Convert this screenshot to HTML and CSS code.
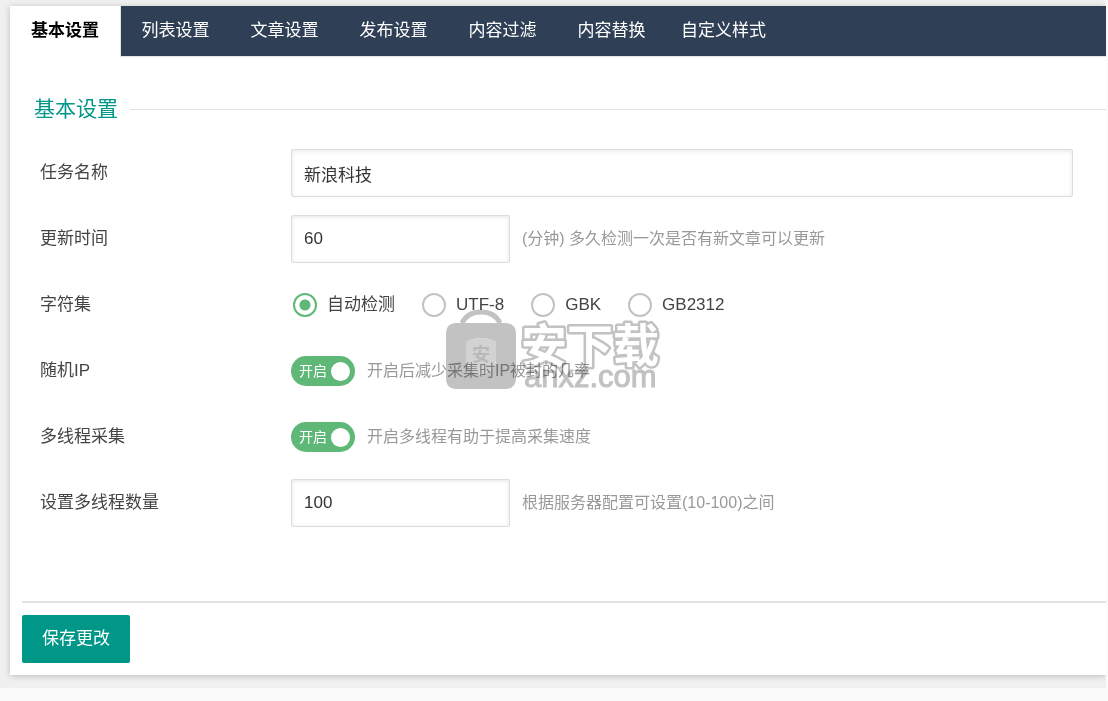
FILE: index.html
```html
<!DOCTYPE html>
<html lang="zh-CN">
<head>
<meta charset="utf-8">
<title>基本设置</title>
<link rel="stylesheet" href="styles.css">
</head>
<body>
<main class="page">
  <form class="panel">
    <nav class="tabs">
      <a class="tab tab-active" href="#basic">基本设置</a>
      <a class="tab" href="#list">列表设置</a>
      <a class="tab" href="#article">文章设置</a>
      <a class="tab" href="#publish">发布设置</a>
      <a class="tab" href="#filter">内容过滤</a>
      <a class="tab" href="#replace">内容替换</a>
      <a class="tab" href="#style">自定义样式</a>
    </nav>
    <h2 class="title">基本设置</h2>
    <div class="rows">
      <div class="row">
        <label class="name" for="task">任务名称</label>
        <div class="field"><input class="text" id="task" type="text" value="新浪科技"></div>
      </div>
      <div class="row">
        <label class="name" for="interval">更新时间</label>
        <div class="field"><input class="text text-short" id="interval" type="text" value="60"><span class="hint">(分钟) 多久检测一次是否有新文章可以更新</span></div>
      </div>
      <div class="row" role="radiogroup" aria-labelledby="charset">
        <span class="name" id="charset">字符集</span>
        <div class="field radios">
          <label class="choice"><input class="radio" type="radio" name="charset" checked>自动检测</label>
          <label class="choice"><input class="radio" type="radio" name="charset">UTF-8</label>
          <label class="choice"><input class="radio" type="radio" name="charset">GBK</label>
          <label class="choice"><input class="radio" type="radio" name="charset">GB2312</label>
        </div>
      </div>
      <div class="row">
        <label class="name" for="random-ip">随机IP</label>
        <div class="field"><label class="switch"><input class="switch-input" id="random-ip" type="checkbox" role="switch" checked>开启<span class="knob"></span></label><span class="hint">开启后减少采集时IP被封的几率</span></div>
      </div>
      <div class="row">
        <label class="name" for="threads">多线程采集</label>
        <div class="field"><label class="switch"><input class="switch-input" id="threads" type="checkbox" role="switch" checked>开启<span class="knob"></span></label><span class="hint">开启多线程有助于提高采集速度</span></div>
      </div>
      <div class="row">
        <label class="name" for="count">设置多线程数量</label>
        <div class="field"><input class="text text-short" id="count" type="text" value="100"><span class="hint">根据服务器配置可设置(10-100)之间</span></div>
      </div>
    </div>
    <div class="actions"><button class="save" type="button">保存更改</button></div>
  </form>
</main>
<svg class="watermark" width="220" height="86" viewBox="0 0 220 86" aria-hidden="true">
  <path d="M17 15C21 7 28 4 36 4s15 3 19 11" fill="none" stroke="#c2c2c2" stroke-width="5"/>
  <path fill="#c2c2c2" fill-rule="evenodd" d="M12 15H60Q71 15 71 26V70Q71 81 60 81H12Q1 81 1 70V26Q1 15 12 15ZM21 34Q36 26 51 34V53Q50 62 36 67Q22 62 21 53Z"/>
  <path fill="#d2d2d2" d="M21 34Q36 26 51 34V53Q50 62 36 67Q22 62 21 53Z"/>
  <text class="seal" x="27" y="53">安</text>
  <text class="brand" x="76" y="54">安下载</text>
  <text class="domain" x="79" y="79">anxz.com</text>
</svg>
</body>
</html>
```
FILE: styles.css
```css
* { box-sizing: border-box; }
body {
  margin: 0;
  background: #fafafa;
  color: #444;
  font: 17px/24px "Liberation Sans", "Noto Sans CJK SC", sans-serif;
}
.page {
  margin-right: 2px;
  padding: 6px 0 13px 10px;
  background: #f0f0f0;
  overflow: hidden;
}
.panel {
  margin: 0;
  background: #fff;
  box-shadow: 0 1px 6px rgba(0, 0, 0, 0.22);
}
.tabs {
  display: flex;
  height: 51px;
  background: #2f4056;
  border-bottom: 1px solid #e2e2e2;
}
.tab {
  min-width: 109px;
  padding: 0 15px;
  line-height: 50px;
  text-align: center;
  color: #fff;
  text-decoration: none;
  white-space: nowrap;
}
.tab-active {
  min-width: 111px;
  height: 51px;
  background: #fff;
  border-right: 1px solid #e2e2e2;
  color: #000;
  font-weight: 700;
}
.title {
  display: flex;
  align-items: center;
  gap: 12px;
  margin: 0;
  padding: 36px 0 14px 24px;
  color: #009688;
  font-size: 21px;
  font-weight: 400;
  line-height: 32px;
}
.title::after {
  content: "";
  flex: 1;
  height: 1px;
  background: #e2e2e2;
}
.rows { padding: 1px 33px 0 30px; }
.row {
  display: grid;
  grid-template-columns: 251px 1fr;
  align-items: center;
  height: 66px;
}
.field {
  display: flex;
  align-items: center;
  gap: 12px;
}
.text {
  width: 100%;
  height: 48px;
  padding: 0 12px;
  border: 1px solid #ddd;
  border-radius: 2px;
  background: #fff;
  box-shadow: inset 0 1px 4px rgba(0, 0, 0, 0.1);
  color: #333;
  font: inherit;
}
.text-short { width: 219px; }
.hint {
  color: #999;
  font-size: 16px;
  white-space: nowrap;
}
.radios {
  gap: 27px;
  padding-left: 2px;
}
.choice {
  display: flex;
  align-items: center;
  gap: 10px;
}
.radio {
  appearance: none;
  width: 24px;
  height: 24px;
  margin: 0;
  border: 2px solid #c2c2c2;
  border-radius: 50%;
}
.radio:checked {
  border-color: #5fb878;
  background: radial-gradient(circle, #5fb878 5px, #fff 6px);
}
.switch {
  display: flex;
  align-items: center;
  justify-content: space-between;
  width: 64px;
  height: 30px;
  padding: 0 5px 0 8px;
  border-radius: 15px;
  background: #5fb878;
  color: #fff;
  font-size: 14px;
}
.switch-input {
  position: absolute;
  opacity: 0;
}
.knob {
  width: 19px;
  height: 19px;
  border-radius: 50%;
  background: #fff;
}
.actions {
  margin: 65px 0 0 12px;
  padding: 12px 0;
  border-top: 2px solid #e2e2e2;
}
.save {
  display: block;
  height: 48px;
  padding: 0 20px;
  border: 0;
  border-radius: 2px;
  background: #009688;
  color: #fff;
  font: inherit;
}
.watermark {
  position: absolute;
  left: 445px;
  top: 308px;
  pointer-events: none;
  mix-blend-mode: multiply;
}
.seal {
  fill: #b8b8b8;
  font-size: 18px;
  font-weight: 700;
}
.brand {
  fill: #fff;
  stroke: #c2c2c2;
  stroke-width: 5;
  stroke-linejoin: round;
  paint-order: stroke;
  font-size: 46px;
  font-weight: 700;
}
.domain {
  fill: #c2c2c2;
  stroke: #c2c2c2;
  font-size: 31px;
}
```
